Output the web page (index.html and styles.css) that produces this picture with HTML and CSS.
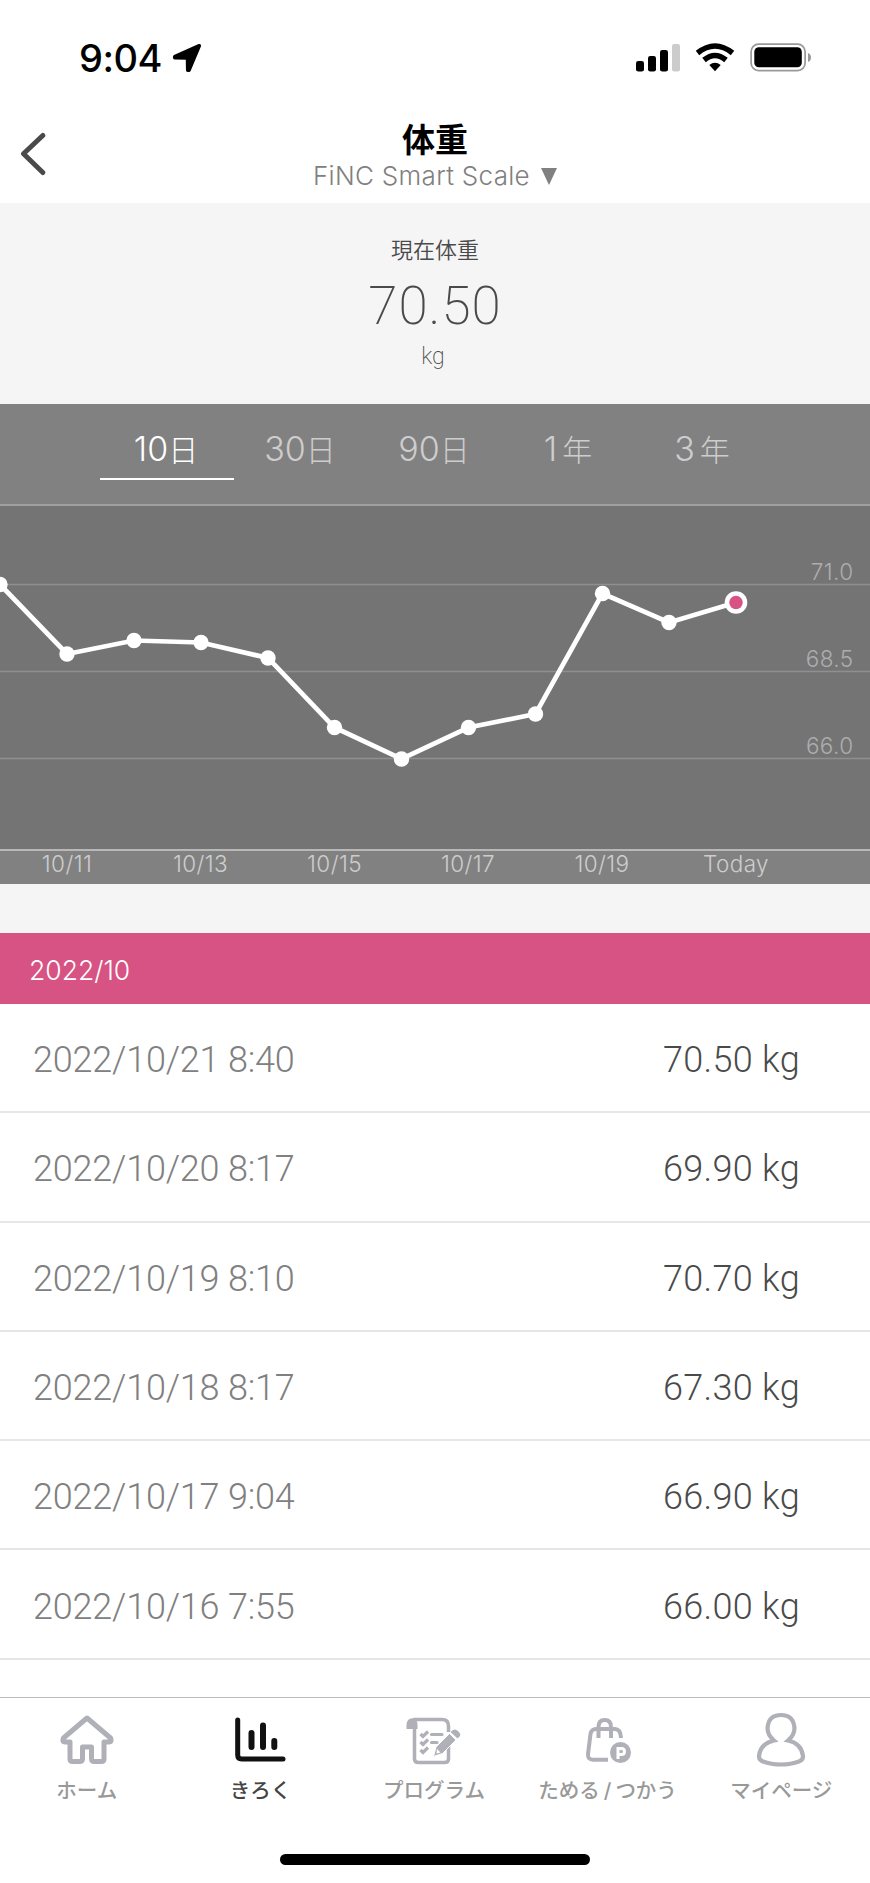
FILE: index.html
```html
<!DOCTYPE html>
<html lang="ja">
<head>
    <meta charset="UTF-8">
    <meta name="viewport" content="width=device-width, initial-scale=1.0">
    <title>体重</title>
    <link rel="stylesheet" href="styles.css">
</head>
<body>
    <div class="status-bar">
        <div class="status-left">
            <span class="time">9:04</span>
            <svg width="30" height="30" viewBox="0 0 30 30"><path d="M27.300 2.700 L2.700 13.700 L2.700 14.800 L15.500 15 L15.700 27.200 L17 27.200 Z" fill="#000" stroke="#000" stroke-width="3.500" stroke-linejoin="round"/></svg>
        </div>
        <svg class="status-icons" width="177" height="30" viewBox="0 0 177 30">
            <rect x="1" y="18" width="8" height="10.500" rx="2.300"/>
            <rect x="13" y="13" width="8" height="15.500" rx="2.300"/>
            <rect x="25" y="7" width="8" height="21.500" rx="2.300"/>
            <rect x="37" y="1" width="8" height="27.500" rx="2.300" fill="#ccc"/>
            <path d="M62.500 10 Q80 -4 97.500 10" fill="none" stroke="#000" stroke-width="5.500"/>
            <path d="M69 17 Q80 8 91 17" fill="none" stroke="#000" stroke-width="5.500"/>
            <path d="M74.300 22 Q80 17.500 85.700 22 L80 28.300 Z"/>
            <rect x="116.100" y="1.100" width="54" height="26.500" rx="7.500" fill="none" stroke="#999" stroke-width="1.700"/>
            <rect x="119.300" y="4.300" width="47.500" height="20" rx="4.500"/>
            <path d="M173 10 Q176 11 176 14.500 Q176 18 173 19 Z" fill="#999"/>
        </svg>
    </div>

    <header class="header">
        <svg class="back" width="28" height="44" viewBox="0 0 28 44"><path d="M22.800 3.500 L3.500 21.800 L22.800 40.500" fill="none" stroke="#4a4a4a" stroke-width="5" stroke-linecap="round" stroke-linejoin="round"/></svg>
        <div class="header-title">
            <h1>体重</h1>
            <div class="device">
                <span>FiNC Smart Scale</span>
                <svg width="16" height="17" viewBox="0 0 16 17"><path d="M0 0 H16 L8 17 Z" fill="#808080"/></svg>
            </div>
        </div>
    </header>

    <section class="current">
        <div class="current-label">現在体重</div>
        <div class="current-value">70.50</div>
        <div class="current-unit">kg</div>
    </section>

    <section class="chart">
        <nav class="range">
            <a class="active">10<span>日</span></a>
            <a>30<span>日</span></a>
            <a>90<span>日</span></a>
            <a class="years">1<span>年</span></a>
            <a class="years">3<span>年</span></a>
        </nav>
        <svg class="plot" width="870" height="378" viewBox="0 0 870 378">
            <rect width="870" height="344" fill="#747474"/>
            <g stroke="#8f8f8f" stroke-width="1.300">
                <path d="M0 78.500 H870"/>
                <path d="M0 165.500 H870"/>
                <path d="M0 252.500 H870"/>
            </g>
            <path d="M0 344 H870" stroke="#b8b8b8" stroke-width="2"/>
            <g class="y-labels" text-anchor="end">
                <text x="853.500" y="73.500">71.0</text>
                <text x="853.500" y="160.500">68.5</text>
                <text x="853.500" y="247.500">66.0</text>
            </g>
            <g class="x-labels" text-anchor="middle">
                <text x="67" y="366">10/11</text>
                <text x="200.500" y="366">10/13</text>
                <text x="334.500" y="366">10/15</text>
                <text x="468" y="366">10/17</text>
                <text x="602" y="366">10/19</text>
                <text x="736" y="366">Today</text>
            </g>
            <polyline points="0,78.500 67,148 134,134.500 201,136.500 268,152 334.500,221.500 401.500,253 468.500,221.500 535.500,208 602.500,87.500 669,116.500 736,96.500" fill="none" stroke="#fff" stroke-width="4.700"/>
            <g fill="#fff">
                <circle cx="0" cy="78.500" r="7.700"/>
                <circle cx="67" cy="148" r="7.700"/>
                <circle cx="134" cy="134.500" r="7.700"/>
                <circle cx="201" cy="136.500" r="7.700"/>
                <circle cx="268" cy="152" r="7.700"/>
                <circle cx="334.500" cy="221.500" r="7.700"/>
                <circle cx="401.500" cy="253" r="7.700"/>
                <circle cx="468.500" cy="221.500" r="7.700"/>
                <circle cx="535.500" cy="208" r="7.700"/>
                <circle cx="602.500" cy="87.500" r="7.700"/>
                <circle cx="669" cy="116.500" r="7.700"/>
                <circle cx="736" cy="96.500" r="11.300"/>
            </g>
            <circle cx="736" cy="96.500" r="6.700" fill="#d75383"/>
        </svg>
    </section>

    <section class="history">
        <h2>2022/10</h2>
        <ul>
            <li><span class="date">2022/10/21 8:40</span><span class="weight">70.50 kg</span></li>
            <li><span class="date">2022/10/20 8:17</span><span class="weight">69.90 kg</span></li>
            <li><span class="date">2022/10/19 8:10</span><span class="weight">70.70 kg</span></li>
            <li><span class="date">2022/10/18 8:17</span><span class="weight">67.30 kg</span></li>
            <li><span class="date">2022/10/17 9:04</span><span class="weight">66.90 kg</span></li>
            <li><span class="date">2022/10/16 7:55</span><span class="weight">66.00 kg</span></li>
        </ul>
    </section>

    <footer class="tab-bar">
        <nav class="tabs">
            <a>
                <svg width="60" height="60" viewBox="0 0 60 60" fill="none" stroke="#b0b0b8" stroke-width="5" stroke-linejoin="round"><path d="M30 8 L6.500 28 Q4.500 31.500 8 32 H13 V49 Q13 51.500 15.500 51.500 H22.500 Q25.500 51.500 25.500 48.500 V37 H34.500 V48.500 Q34.500 51.500 37.500 51.500 H44.500 Q47 51.500 47 49 V32 H52 Q55.500 31.500 53.500 28 Z"/></svg>
                <span>ホーム</span>
            </a>
            <a class="active">
                <svg width="60" height="60" viewBox="0 0 60 60" fill="none" stroke="#111" stroke-width="5" stroke-linecap="round"><path d="M7.700 10 V45 Q7.700 49 11.700 49 H53"/><path d="M21.500 23 V37 M33 15.500 V37 M44.300 31 V37" stroke-width="6"/></svg>
                <span>きろく</span>
            </a>
            <a>
                <svg width="60" height="60" viewBox="0 0 60 60" fill="none" stroke="#b0b0b8" stroke-width="3.500">
                    <path d="M10 9.500 H38 Q44.500 9.500 44.500 16 V22 M44.500 36 V49 Q44.500 52.500 40.500 52.500 H14.500 Q10.500 52.500 10.500 49 V14"/>
                    <path d="M2.500 19 V15 Q2.500 8 10 8 Q13.500 10 13.500 15 V19 Z" fill="#b0b0b8" stroke="none"/>
                    <path d="M16.500 24 L19 26.500 L24 21.500 M16.500 32 L19 34.500 L24 29.500 M16.500 40 L19 42.500 L24 37.500" stroke-width="3.200"/>
                    <path d="M27.500 24.500 H38 M27.500 32.500 H33" stroke-width="3.200" stroke-linecap="round"/>
                    <path d="M29.500 46.500 L32 37 L45.500 23.500 L52 30 L38.500 43.500 Z" fill="#b0b0b8" stroke="#fff" stroke-width="1"/>
                    <path d="M46.500 22 L49 20 Q51.500 18.500 54.500 21.500 Q57.500 24.500 55.500 26.500 L53.500 28.500 Z" fill="#b0b0b8" stroke="none"/>
                    <path d="M33 39 L36.500 42.500 L32.500 43.500 Z" fill="#fff" stroke="none"/>
                </svg>
                <span>プログラム</span>
            </a>
            <a>
                <svg width="60" height="60" viewBox="-6 0 60 60" fill="none" stroke="#b0b0b8" stroke-width="4">
                    <path d="M37 28 Q36.500 19 31 19 H12 Q7.500 19 6.500 24 L4 44 Q3.500 49.700 9 49.700 H24"/>
                    <path d="M14.500 28 V17 Q14.500 10 20.700 10 Q27 10 27 17 V28"/>
                    <circle cx="36.500" cy="42.500" r="10.500" fill="#b0b0b8" stroke="none"/>
                    <path d="M34 49 V38.500 H37.500 Q40.500 38.500 40.500 41.500 Q40.500 44.500 37.500 44.500 H34" stroke="#fff" stroke-width="3"/>
                </svg>
                <span>ためる<i>/</i>つかう</span>
            </a>
            <a>
                <svg width="60" height="60" viewBox="0 0 60 60" fill="none" stroke="#b0b0b8" stroke-width="4.200"><path d="M23 30.500 Q16.500 25 16.500 18 Q17.500 5 30 5 Q42.500 5 43.500 18 Q43.500 25 37 30.500 Q50.500 33.500 52 46 Q52.300 50 48 51.500 Q40 54.500 30 54.500 Q20 54.500 12 51.500 Q7.700 50 8 46 Q9.500 33.500 23 30.500 Z"/></svg>
                <span>マイページ</span>
            </a>
        </nav>
        <div class="home-indicator"></div>
    </footer>
</body>
</html>
```
FILE: styles.css
```css
* {
    box-sizing: border-box;
}

body {
    margin: 0;
    width: 870px;
    height: 1883px;
    overflow: hidden;
    display: flex;
    flex-direction: column;
    background: #fff;
    font-family: Inter, "Noto Sans CJK JP", sans-serif;
}

.status-bar {
    height: 115px;
    padding: 43px 58px 0 79px;
    display: flex;
    justify-content: space-between;
}

.status-left {
    display: flex;
    height: 30px;
    gap: 10px;
}

.time {
    width: 83px;
    font-size: 38px;
    font-weight: 550;
    line-height: 31px;
    letter-spacing: -0.5px;
    white-space: nowrap;
}

.header {
    height: 88px;
    display: grid;
    grid-template-columns: 100px 1fr 100px;
}

.back {
    margin: 17px 0 0 20px;
}

.header-title {
    text-align: center;
}

.header h1 {
    margin: 6px 0 0;
    font-size: 33px;
    font-weight: 600;
    line-height: 38px;
}

.device {
    display: flex;
    justify-content: center;
    align-items: center;
    gap: 11px;
    margin-top: 2px;
    color: #808080;
    font-size: 26px;
    font-weight: 350;
    line-height: 30px;
    letter-spacing: 0.3px;
}

.current {
    height: 201px;
    background: #f5f5f5;
    color: #4a4a4a;
    text-align: center;
}

.current-label {
    padding-top: 31px;
    font-size: 22px;
    font-weight: 350;
    line-height: 32px;
}

.current-value {
    margin-top: 12px;
    font-family: Roboto, sans-serif;
    font-size: 53px;
    font-weight: 200;
    line-height: 57px;
    letter-spacing: 1px;
}

.current-unit {
    font-family: Roboto, sans-serif;
    font-size: 23px;
    font-weight: 200;
    line-height: 44px;
    padding-right: 4px;
}

.chart {
    background: #818181;
}

.range {
    height: 102px;
    padding: 0 67px 0 100px;
    display: grid;
    grid-template-columns: repeat(5, 134px);
    align-items: start;
    border-bottom: 2px solid #a0a0a0;
}

.range a {
    height: 76px;
    padding: 26px 2px 0 0;
    color: #cdcdcd;
    font-size: 34px;
    font-weight: 300;
    line-height: 38px;
    text-align: center;
    white-space: nowrap;
}

.range span {
    font-size: 30px;
}

.range .years span {
    margin-left: 5px;
}

.range .active {
    color: #fff;
    border-bottom: 2px solid #fff;
}

.plot {
    display: block;
}

.plot text {
    font-size: 22.5px;
    letter-spacing: 0.4px;
    font-weight: 350;
}

.y-labels {
    fill: #adadad;
}

.x-labels {
    fill: #cdcdcd;
}

.history {
    flex: 1;
    padding-top: 49px;
    background: linear-gradient(#f5f5f5 49px, #fff 49px);
}

.history h2 {
    margin: 0;
    height: 71px;
    padding: 2px 29px 0;
    background: #d75383;
    color: #fff;
    font-size: 26.5px;
    font-weight: 350;
    line-height: 71px;
}

.history ul {
    margin: 0;
    padding: 0;
    list-style: none;
}

.history li {
    height: 109.3px;
    padding: 5px 70px 0 33px;
    display: flex;
    justify-content: space-between;
    align-items: center;
    border-bottom: 2px solid #e6e6e6;
    font-family: Roboto, sans-serif;
    font-size: 36px;
    font-weight: 300;
}

.date {
    color: #808080;
    letter-spacing: -0.2px;
}

.weight {
    color: #4a4a4a;
    letter-spacing: 0.3px;
}

.tab-bar {
    height: 186px;
    border-top: 1px solid #bbb;
    display: flex;
    flex-direction: column;
    align-items: center;
    background: #fff;
}

.tabs {
    width: 868px;
    height: 156px;
    margin-right: 2px;
    display: grid;
    grid-template-columns: repeat(5, 1fr);
}

.tabs a {
    display: flex;
    flex-direction: column;
    align-items: center;
    padding-top: 12px;
    color: #999;
    font-size: 20.5px;
    font-weight: 500;
    line-height: 30px;
    white-space: nowrap;
}

.tabs span {
    margin-top: 6px;
}

.tabs i {
    margin: 0 4px;
    font-style: normal;
}

.tabs .active {
    color: #444;
}

.home-indicator {
    width: 310px;
    height: 11px;
    border-radius: 6px;
    background: #000;
}
```
